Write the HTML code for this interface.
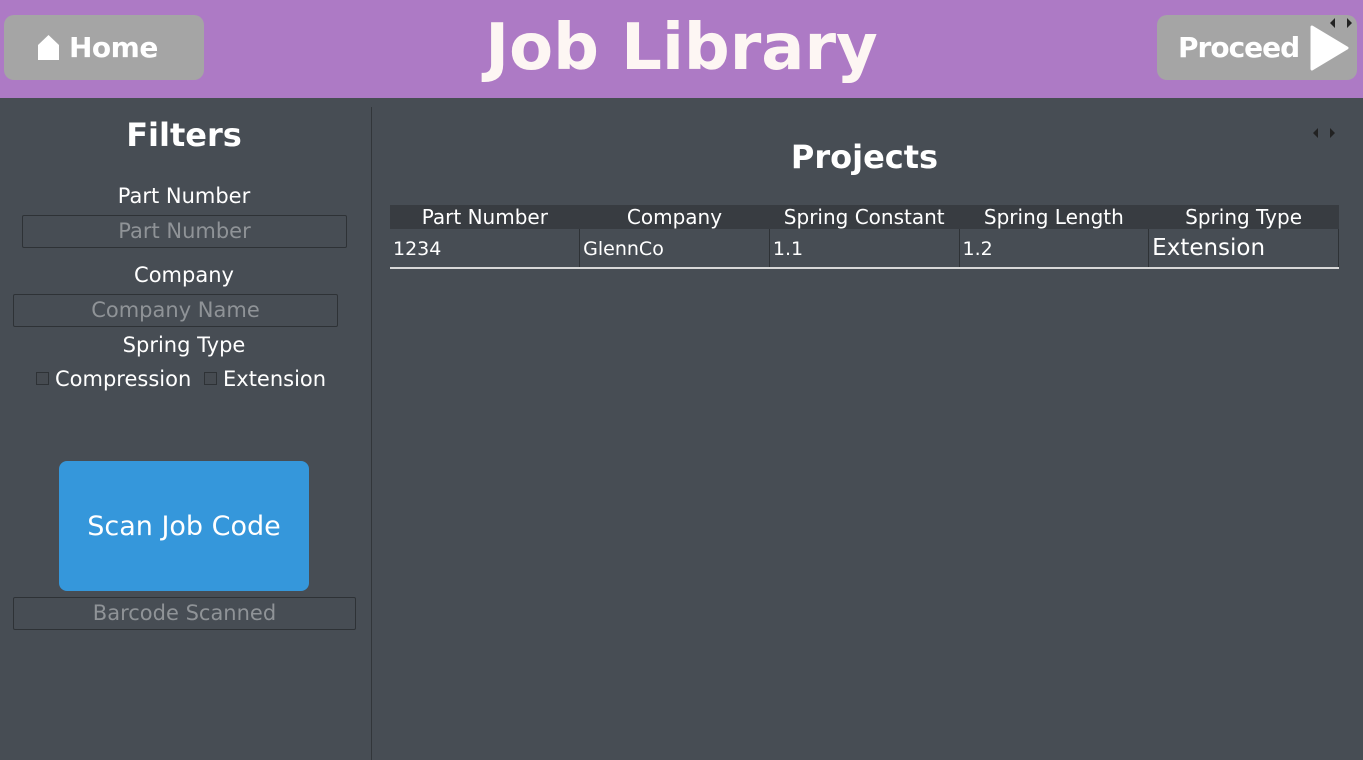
<!DOCTYPE html>
<html><head><meta charset="utf-8"><style>
*{margin:0;padding:0;box-sizing:border-box}
body{width:1363px;height:760px;overflow:hidden;background:#474d54;font-family:"DejaVu Sans","Liberation Sans",sans-serif;color:#fff;position:relative}
.a{position:absolute}
.hdr{left:0;top:0;width:1363px;height:98px;background:#ad7ac5}
.btn{background:#a5a5a5;border-radius:10px;font-weight:bold;color:#fff}
.c{text-align:center}
.inp{border:1px solid #2e3236;border-radius:2px;color:#8f9397;font-size:21px;text-align:center;line-height:31px}
.lbl{font-size:21px;text-align:center;width:368px;left:0}
.cb{width:13px;height:13px;border:1px solid #2e3236;background:#464b51}
table{border-collapse:collapse}
th{background:#383c41;font-weight:normal;font-size:20px;height:24px;width:190px;text-align:center}
td{font-size:19px;height:39px;border-right:1px solid #2e3236;border-bottom:2px solid #d8d8d8;padding-left:3px;padding-top:2px;text-align:left}
</style></head><body>
<div class="a hdr"></div>
<div class="a btn" style="left:4px;top:15px;width:200px;height:65px"></div>
<svg class="a" style="left:37px;top:35px" width="23" height="25" viewBox="0 0 23 25"><path d="M1 10 L11.5 0 L22 10 V25 H1 Z" fill="#fff"/></svg>
<div class="a" style="left:69px;top:31px;font-size:28px;font-weight:bold;letter-spacing:-0.5px">Home</div>
<div class="a c" style="left:0;width:1363px;top:10px;font-size:64px;font-weight:bold;line-height:76px;color:#fdf6f3">Job Library</div>
<div class="a btn" style="left:1157px;top:15px;width:200px;height:65px"></div>
<div class="a" style="left:1178px;top:31px;font-size:28px;font-weight:bold;letter-spacing:-1px">Proceed</div>
<svg class="a" style="left:1309px;top:25px" width="40" height="46" viewBox="0 0 40 46"><path d="M3 2 L38 23 L3 44 Z" fill="#fff" stroke="#fff" stroke-width="3" stroke-linejoin="round"/></svg>
<svg class="a" style="left:1330px;top:18px" width="22" height="10"><path d="M0 5 L5 0 V10Z M22 5 L17 0 V10Z" fill="#222"/></svg>
<svg class="a" style="left:1313px;top:128px" width="22" height="10"><path d="M0 5 L5 0 V10Z M22 5 L17 0 V10Z" fill="#222"/></svg>

<div class="a" style="left:371px;top:107px;width:1px;height:653px;background:#32363a"></div>

<div class="a c" style="left:0;width:368px;top:116px;font-size:32px;font-weight:bold">Filters</div>
<div class="a lbl" style="top:184px">Part Number</div>
<div class="a inp" style="left:22px;top:215px;width:325px;height:33px">Part Number</div>
<div class="a lbl" style="top:263px">Company</div>
<div class="a inp" style="left:13px;top:294px;width:325px;height:33px">Company Name</div>
<div class="a lbl" style="top:333px">Spring Type</div>
<div class="a cb" style="left:36px;top:372px"></div>
<div class="a" style="left:55px;top:367px;font-size:21px">Compression</div>
<div class="a cb" style="left:204px;top:372px"></div>
<div class="a" style="left:223px;top:367px;font-size:21px">Extension</div>
<div class="a c" style="left:59px;top:461px;width:250px;height:130px;background:#3597db;border-radius:8px;font-size:27px;line-height:132px">Scan Job Code</div>
<div class="a inp" style="left:13px;top:597px;width:343px;height:33px">Barcode Scanned</div>

<div class="a c" style="left:372px;width:985px;top:138px;font-size:32px;font-weight:bold">Projects</div>
<table class="a" style="left:390px;top:205px;width:949px">
<tr><th>Part Number</th><th>Company</th><th>Spring Constant</th><th>Spring Length</th><th>Spring Type</th></tr>
<tr><td>1234</td><td>GlennCo</td><td>1.1</td><td>1.2</td><td style="font-size:23px;padding-top:0">Extension</td></tr>
</table>
</body></html>
